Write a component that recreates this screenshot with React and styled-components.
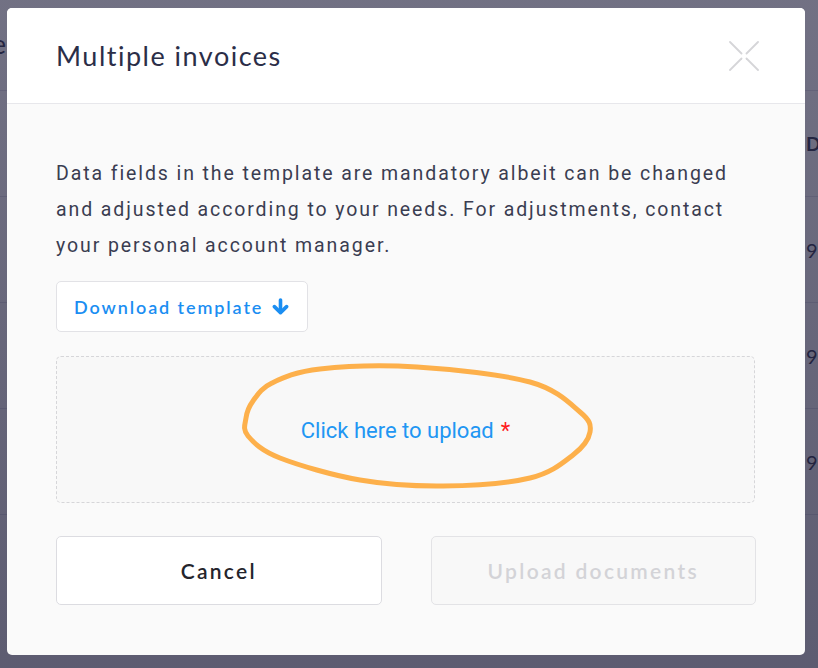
import styled, { createGlobalStyle } from "styled-components";

const GlobalStyle = createGlobalStyle`
  html, body {
    margin: 0;
    padding: 0;
  }
  body {
    width: 818px;
    height: 668px;
    overflow: hidden;
    font-family: "Lato", "Liberation Sans", sans-serif;
  }
`;

// points of the hand drawn marker ring, relative to the upload box
const ringPoints = [
  [216, 27], [264, 13], [361, 11], [474, 26], [524, 56], [534, 76],
  [517, 99], [474, 122], [387, 130], [304, 124], [224, 102], [192, 80],
  [190, 62], [197, 45],
];

function smoothPath(pts) {
  const n = pts.length;
  let d = `M${pts[0][0]} ${pts[0][1]}`;
  for (let i = 0; i < n; i++) {
    const p0 = pts[(i - 1 + n) % n];
    const p1 = pts[i];
    const p2 = pts[(i + 1) % n];
    const p3 = pts[(i + 2) % n];
    const c1 = [p1[0] + (p2[0] - p0[0]) / 6, p1[1] + (p2[1] - p0[1]) / 6];
    const c2 = [p2[0] - (p3[0] - p1[0]) / 6, p2[1] - (p3[1] - p1[1]) / 6];
    d += ` C${c1[0].toFixed(1)} ${c1[1].toFixed(1)} ${c2[0].toFixed(1)} ${c2[1].toFixed(1)} ${p2[0]} ${p2[1]}`;
  }
  return d;
}

export default function App() {
  const rows = ["9 Mar 2023", "9 Mar 2023", "9 Mar 2023"];
  return (
    <Page>
      <GlobalStyle />
      <Behind>
        <PageTitle>Invoice</PageTitle>
        <Table>
          <Row>
            <Cell />
            <HeadCell>Date</HeadCell>
          </Row>
          {rows.map((r, i) => (
            <Row key={i}>
              <Cell />
              <Cell>{r}</Cell>
            </Row>
          ))}
        </Table>
      </Behind>
      <Overlay />
      <ModalLayer>
        <Modal>
          <Header>
            <Title>Multiple invoices</Title>
            <CloseButton aria-label="Close">
              <svg width="30" height="30" viewBox="0 0 30 30">
                <g stroke="#d5d5d8" strokeWidth="1.8" strokeLinecap="round">
                  <line x1="1" y1="1" x2="12.5" y2="12.5" />
                  <line x1="29" y1="1" x2="17.5" y2="12.5" />
                  <line x1="1" y1="29" x2="12.5" y2="17.5" />
                  <line x1="29" y1="29" x2="17.5" y2="17.5" />
                </g>
              </svg>
            </CloseButton>
          </Header>
          <Body>
            <Description>
              Data fields in the template are mandatory albeit can be changed
              and adjusted according to your needs. For adjustments, contact
              your personal account manager.
            </Description>
            <DownloadButton>
              Download template
              <svg width="17" height="17" viewBox="0 0 17 17">
                <g
                  stroke="#1b8ef2"
                  strokeWidth="3.6"
                  fill="none"
                  strokeLinecap="round"
                  strokeLinejoin="round"
                >
                  <line x1="8.5" y1="2" x2="8.5" y2="14" />
                  <polyline points="2.4,8.6 8.5,14.6 14.6,8.6" />
                </g>
              </svg>
            </DownloadButton>
            <UploadArea>
              <UploadText>
                Click here to upload<Required>*</Required>
              </UploadText>
              <Marker viewBox="0 0 699 147" width="699" height="147">
                <path
                  d={smoothPath(ringPoints)}
                  fill="none"
                  stroke="#fdb04b"
                  strokeWidth="5"
                  strokeLinejoin="round"
                />
              </Marker>
            </UploadArea>
            <Actions>
              <ActionButton>Cancel</ActionButton>
              <ActionButton disabled>Upload documents</ActionButton>
            </Actions>
          </Body>
        </Modal>
      </ModalLayer>
    </Page>
  );
}

const Page = styled.div`
  position: relative;
  width: 818px;
  height: 668px;
  overflow: hidden;
  background: #ffffff;
`;

const Behind = styled.div`
  padding-top: 27px;
  color: #2b2e48;
`;

const PageTitle = styled.div`
  width: 6px;
  display: flex;
  justify-content: flex-end;
  white-space: nowrap;
  font-size: 26px;
  line-height: 34px;
  margin-bottom: 29px;
`;

const Table = styled.div`
  display: flex;
  flex-direction: column;
  border-top: 1px solid #dedee8;
`;

const Row = styled.div`
  display: grid;
  grid-template-columns: 806px 200px;
  height: 105px;
  align-items: center;
  border-bottom: 1px solid #dedee8;
  font-family: "Lato", sans-serif;
  font-size: 20px;
  white-space: nowrap;
`;

const Cell = styled.div``;

const HeadCell = styled.div`
  font-weight: 700;
  font-size: 19px;
`;

const Overlay = styled.div`
  position: absolute;
  inset: 0;
  background: linear-gradient(180deg, rgba(34, 33, 62, 0.64), rgba(30, 29, 58, 0.72));
`;

const ModalLayer = styled.div`
  position: absolute;
  inset: 0;
  padding: 8px 0 0 7px;
`;

const Modal = styled.div`
  width: 798px;
  background: #fafafa;
  border-radius: 5px;
  overflow: hidden;
  display: flex;
  flex-direction: column;
`;

const Header = styled.header`
  height: 96px;
  box-sizing: border-box;
  background: #ffffff;
  border-bottom: 1px solid #e7e7eb;
  display: flex;
  align-items: center;
  justify-content: space-between;
  padding: 0 46px 0 49px;
`;

const Title = styled.h2`
  margin: 0;
  font-family: "Lato", sans-serif;
  font-weight: 400;
  font-size: 27px;
  letter-spacing: 1.5px;
  color: #2b2e48;
`;

const CloseButton = styled.button`
  border: none;
  background: none;
  padding: 0;
  width: 30px;
  height: 30px;
  display: flex;
  cursor: pointer;
`;

const Body = styled.div`
  display: flex;
  flex-direction: column;
  align-items: flex-start;
  padding: 52px 49px 50px;
`;

const Description = styled.p`
  margin: 0;
  font-family: "Roboto", sans-serif;
  font-size: 19.5px;
  line-height: 36px;
  letter-spacing: 1.9px;
  color: #3a3d51;
`;

const DownloadButton = styled.button`
  margin-top: 17px;
  height: 51px;
  display: inline-flex;
  align-items: center;
  gap: 9px;
  padding: 0 18px 0 17px;
  background: #ffffff;
  border: 1px solid #e2e2e6;
  border-radius: 5px;
  font-family: "Lato", sans-serif;
  font-weight: 600;
  font-size: 18px;
  letter-spacing: 1.9px;
  color: #1b8ef2;
  cursor: pointer;
`;

const UploadArea = styled.div`
  position: relative;
  margin-top: 24px;
  width: 699px;
  height: 147px;
  box-sizing: border-box;
  border: 1px dashed #d6d6d9;
  border-radius: 5px;
  background: #f8f8f8;
  display: flex;
  align-items: center;
  justify-content: center;
`;

const UploadText = styled.span`
  font-family: "Roboto", sans-serif;
  font-size: 22px;
  color: #2196f3;
  padding-top: 2px;
`;

const Required = styled.span`
  color: #ff1d1d;
  margin-left: 7px;
`;

const Marker = styled.svg`
  position: absolute;
  left: -1px;
  top: -1px;
  pointer-events: none;
`;

const Actions = styled.div`
  margin-top: 33px;
  width: 100%;
  display: grid;
  grid-template-columns: 1fr 1fr;
  gap: 49px;
`;

const ActionButton = styled.button`
  height: 69px;
  border-radius: 5px;
  border: 1px solid ${(p) => (p.disabled ? "#e3e3e6" : "#dcdce1")};
  background: ${(p) => (p.disabled ? "#f8f8f8" : "#ffffff")};
  color: ${(p) => (p.disabled ? "#d3d3d7" : "#24242c")};
  font-family: "Lato", sans-serif;
  font-weight: 600;
  font-size: 21px;
  letter-spacing: 2.3px;
  cursor: ${(p) => (p.disabled ? "default" : "pointer")};
`;
